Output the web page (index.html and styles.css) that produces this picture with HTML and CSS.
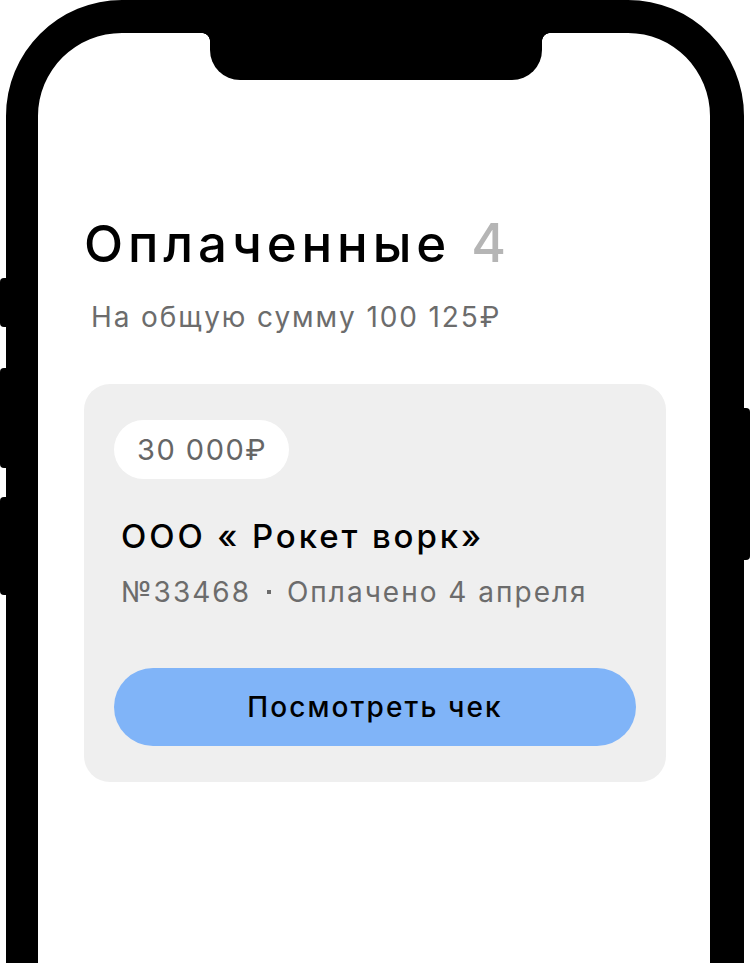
FILE: index.html
```html
<html>
  <head>
    <link rel="stylesheet" href="styles.css">
  </head>
  <body>
    <div class="phone">
      <div class="notch"></div>
      <div class="side-btn left b1"></div>
      <div class="side-btn left b2"></div>
      <div class="side-btn left b3"></div>
      <div class="side-btn right b4"></div>

      <div class="screen">
        <h1 class="title">Оплаченные<span class="count">4</span></h1>
        <p class="total">На общую сумму 100 125₽</p>

        <div class="card">
          <div class="amount">30 000₽</div>
          <div class="company">ООО « Рокет ворк»</div>
          <div class="meta">
            <span>№33468</span>
            <span class="dot"></span>
            <span>Оплачено 4 апреля</span>
          </div>
          <button class="check-btn">Посмотреть чек</button>
        </div>
      </div>
    </div>
  </body>
</html>
```

FILE: styles.css
```css
html, body {
  margin: 0;
  width: 100%;
  height: 100%;
  overflow: hidden;
  background: #fff;
  font-family: 'Inter', 'Noto Sans', sans-serif;
}

.phone {
  position: relative;
  box-sizing: border-box;
  width: 738px;
  height: 1300px;
  margin-left: 6px;
  border: 32px solid #000;
  border-top-width: 33px;
  border-right-width: 34px;
  border-radius: 116px;
  background: #fff;
}

.notch {
  position: absolute;
  top: 0;
  left: 172px;
  width: 332px;
  height: 47px;
  background: #000;
  border-radius: 0 0 30px 30px;
}
.notch::before,
.notch::after {
  content: '';
  position: absolute;
  top: 0;
  width: 8px;
  height: 8px;
}
.notch::before {
  left: -8px;
  background: radial-gradient(circle at 0 100%, transparent 7.5px, #000 8px);
}
.notch::after {
  right: -8px;
  background: radial-gradient(circle at 100% 100%, transparent 7.5px, #000 8px);
}

.side-btn {
  position: absolute;
  width: 10px;
  background: #000;
}
.side-btn.left {
  left: -38px;
  border-radius: 4px 0 0 4px;
}
.side-btn.right {
  right: -40px;
  border-radius: 0 4px 4px 0;
}
.b1 { top: 245px; height: 49px; }
.b2 { top: 335px; height: 100px; }
.b3 { top: 464px; height: 98px; }
.b4 { top: 375px; height: 152px; }

.screen {
  padding: 179px 44px 0 46px;
}

.title {
  margin: 0;
  font-size: 51px;
  font-weight: 500;
  line-height: 62px;
  color: #000;
  letter-spacing: 4.9px;
}
.title .count {
  color: #b5b5b5;
  margin-left: 20px;
  font-size: 53px;
  letter-spacing: 0;
}

.total {
  margin: 25px 0 0 7px;
  font-size: 28px;
  line-height: 34px;
  color: #6c6c6c;
  letter-spacing: 1.9px;
}

.card {
  margin-top: 50px;
  background: #efefef;
  border-radius: 26px;
  padding: 36px 30px 36px 30px;
}

.amount {
  display: inline-block;
  height: 59px;
  line-height: 59px;
  padding: 0 22px 0 23px;
  border-radius: 30px;
  background: #fff;
  font-size: 29px;
  color: #666;
  letter-spacing: 1.5px;
}

.company {
  margin: 37px 0 0 7px;
  font-size: 33px;
  font-weight: 500;
  line-height: 40px;
  color: #000;
  letter-spacing: 2.9px;
}

.meta {
  display: flex;
  align-items: center;
  gap: 16px;
  margin: 18px 0 0 7px;
  font-size: 28px;
  line-height: 36px;
  color: #6c6c6c;
  letter-spacing: 2px;
}
.meta .dot {
  width: 4px;
  height: 4px;
  background: #6c6c6c;
}

.check-btn {
  display: block;
  width: 100%;
  height: 78px;
  margin-top: 58px;
  border: none;
  border-radius: 39px;
  background: #80b4f8;
  font-family: inherit;
  font-size: 28px;
  font-weight: 500;
  color: #000;
  letter-spacing: 2.1px;
}
```
